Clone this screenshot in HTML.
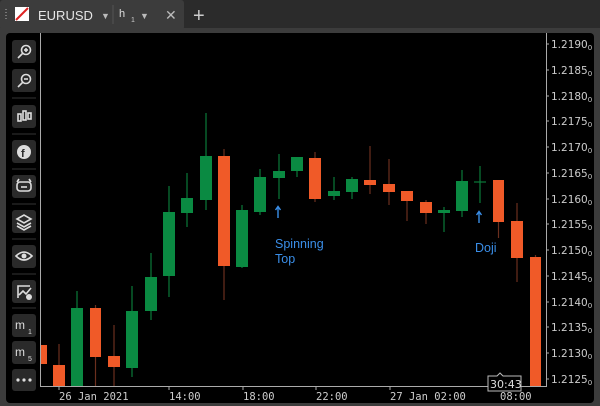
<!DOCTYPE html>
<html><head><meta charset="utf-8"><style>
body{margin:0;width:600px;height:406px;background:#3b3b3b;overflow:hidden;font-family:"Liberation Sans",sans-serif}
</style></head><body>
<svg width="600" height="406" xmlns="http://www.w3.org/2000/svg" style="position:absolute;left:0;top:0">
<rect x="0" y="0" width="600" height="28" fill="#2b2b2b"/>
<rect x="0" y="0" width="184" height="30" rx="3" fill="#3c3c3c"/>
<rect x="0" y="28" width="600" height="378" fill="#3c3c3c"/>
<g fill="#777"><rect x="5" y="9" width="2" height="1"/><rect x="5" y="12" width="2" height="1"/><rect x="5" y="15" width="2" height="1"/><rect x="5" y="18" width="2" height="1"/></g>
<rect x="15" y="7" width="14" height="14" fill="#fff"/>
<line x1="16" y1="20" x2="28" y2="8" stroke="#d22" stroke-width="2"/>
<text x="38" y="20" fill="#e6e6e6" font-size="13">EURUSD</text>
<text x="101" y="19" fill="#bbb" font-size="9">▼</text>
<line x1="113" y1="5" x2="113" y2="24" stroke="#555"/>
<text x="119" y="17" fill="#ddd" font-size="11">h</text>
<text x="131" y="22" fill="#ccc" font-size="7">1</text>
<text x="140" y="19" fill="#bbb" font-size="9">▼</text>
<text x="165" y="20" fill="#bbb" font-size="14">✕</text>
<text x="193" y="22" fill="#ccc" font-size="20">+</text>
<rect x="6" y="33" width="588" height="370" rx="4" fill="#000"/>
<g fill="#2a2a2a">
<rect x="12" y="40" width="24" height="23" rx="3"/><rect x="12" y="69" width="24" height="23" rx="3"/>
<rect x="12" y="105" width="24" height="23" rx="3"/><rect x="12" y="140" width="24" height="23" rx="3"/>
<rect x="12" y="175" width="24" height="23" rx="3"/><rect x="12" y="210" width="24" height="23" rx="3"/>
<rect x="12" y="245" width="24" height="23" rx="3"/><rect x="12" y="280" width="24" height="23" rx="3"/>
<rect x="12" y="314" width="24" height="23" rx="3"/><rect x="12" y="341" width="24" height="23" rx="3"/>
<rect x="12" y="369" width="24" height="22" rx="3"/>
</g>
<g stroke="#333"><line x1="12" y1="98" x2="36" y2="98"/><line x1="12" y1="134" x2="36" y2="134"/><line x1="12" y1="169" x2="36" y2="169"/><line x1="12" y1="204" x2="36" y2="204"/><line x1="12" y1="239" x2="36" y2="239"/><line x1="12" y1="274" x2="36" y2="274"/><line x1="12" y1="308" x2="36" y2="308"/></g>
<g stroke="#ddd" fill="none" stroke-width="1.6">
<circle cx="26" cy="50" r="4.5"/><line x1="23" y1="53" x2="18" y2="58"/><line x1="24" y1="50" x2="28" y2="50"/><line x1="26" y1="48" x2="26" y2="52"/>
<circle cx="26" cy="79" r="4.5"/><line x1="23" y1="82" x2="18" y2="87"/><line x1="24" y1="79" x2="28" y2="79"/>
<rect x="18" y="114" width="3" height="7"/><rect x="23" y="111" width="3" height="9"/><rect x="28" y="113" width="3" height="6"/>
<rect x="17" y="182" width="14" height="9" rx="3"/><line x1="17" y1="182" x2="19" y2="179"/><line x1="31" y1="182" x2="29" y2="179"/><line x1="21" y1="187" x2="27" y2="187"/>
<path d="M17 219l7-4 7 4-7 4z M17 223l7 4 7-4 M17 226l7 4 7-4"/>
<path d="M16 256q8-8 16 0q-8 8-16 0z"/>
<path d="M18 298v-12h12 M19 295l4-4 3 3 5-6"/>
</g>
<circle cx="24" cy="152" r="7" fill="#ddd"/><text x="21" y="157" fill="#2a2a2a" font-size="11" font-weight="bold">f</text>
<circle cx="24" cy="256" r="2.5" fill="#ddd"/>
<circle cx="29" cy="297" r="3" fill="#ddd"/>
<text x="15" y="329" fill="#ddd" font-size="12">m</text><text x="28" y="334" fill="#ddd" font-size="7">1</text>
<text x="15" y="356" fill="#ddd" font-size="12">m</text><text x="28" y="361" fill="#ddd" font-size="7">5</text>
<g fill="#ddd"><circle cx="18" cy="380" r="1.6"/><circle cx="24" cy="380" r="1.6"/><circle cx="30" cy="380" r="1.6"/></g>
<line x1="40.5" y1="33" x2="40.5" y2="386" stroke="#aaa"/>
<line x1="40" y1="386.5" x2="546" y2="386.5" stroke="#aaa"/>
<line x1="546.5" y1="33" x2="546.5" y2="387" stroke="#aaa"/>
<g stroke="#aaa"><line x1="59" y1="386" x2="59" y2="390"/><line x1="169" y1="386" x2="169" y2="390"/><line x1="243" y1="386" x2="243" y2="390"/><line x1="316" y1="386" x2="316" y2="390"/><line x1="390" y1="386" x2="390" y2="390"/><line x1="500" y1="386" x2="500" y2="390"/></g>
<g font-family="DejaVu Sans Mono,monospace" font-size="10.5" fill="#ccc">
<text x="59" y="400">26 Jan 2021</text><text x="169" y="400">14:00</text><text x="243" y="400">18:00</text><text x="316" y="400">22:00</text><text x="390" y="400">27 Jan 02:00</text><text x="500" y="400">08:00</text>
</g>
<g font-family="DejaVu Sans,sans-serif" font-size="10.5" fill="#ccc">
<text x="551" y="48">1.2190<tspan font-size="7" dy="2">0</tspan></text>
<text x="551" y="74">1.2185<tspan font-size="7" dy="2">0</tspan></text>
<text x="551" y="100">1.2180<tspan font-size="7" dy="2">0</tspan></text>
<text x="551" y="125">1.2175<tspan font-size="7" dy="2">0</tspan></text>
<text x="551" y="151">1.2170<tspan font-size="7" dy="2">0</tspan></text>
<text x="551" y="177">1.2165<tspan font-size="7" dy="2">0</tspan></text>
<text x="551" y="203">1.2160<tspan font-size="7" dy="2">0</tspan></text>
<text x="551" y="228">1.2155<tspan font-size="7" dy="2">0</tspan></text>
<text x="551" y="254">1.2150<tspan font-size="7" dy="2">0</tspan></text>
<text x="551" y="280">1.2145<tspan font-size="7" dy="2">0</tspan></text>
<text x="551" y="306">1.2140<tspan font-size="7" dy="2">0</tspan></text>
<text x="551" y="331">1.2135<tspan font-size="7" dy="2">0</tspan></text>
<text x="551" y="357">1.2130<tspan font-size="7" dy="2">0</tspan></text>
<text x="551" y="383">1.2125<tspan font-size="7" dy="2">0</tspan></text>
</g>
<g stroke="#aaa"><line x1="546" y1="44" x2="549" y2="44"/><line x1="546" y1="70" x2="549" y2="70"/><line x1="546" y1="96" x2="549" y2="96"/><line x1="546" y1="121" x2="549" y2="121"/><line x1="546" y1="147" x2="549" y2="147"/><line x1="546" y1="173" x2="549" y2="173"/><line x1="546" y1="199" x2="549" y2="199"/><line x1="546" y1="224" x2="549" y2="224"/><line x1="546" y1="250" x2="549" y2="250"/><line x1="546" y1="276" x2="549" y2="276"/><line x1="546" y1="302" x2="549" y2="302"/><line x1="546" y1="327" x2="549" y2="327"/><line x1="546" y1="353" x2="549" y2="353"/><line x1="546" y1="379" x2="549" y2="379"/></g>
<g stroke-width="1.2">
<g stroke="#6b2f1e" fill="#f05a28">
<rect x="41" y="345" width="6" height="19" stroke="none"/>
<line x1="59" y1="344" x2="59" y2="386"/><rect x="53" y="365" width="12" height="21" stroke="none"/>
<line x1="95.5" y1="305" x2="95.5" y2="386"/><rect x="90" y="308" width="11" height="49" stroke="none"/>
<line x1="114" y1="325" x2="114" y2="386"/><rect x="108" y="356" width="12" height="11" stroke="none"/>
<line x1="224" y1="149" x2="224" y2="300"/><rect x="218" y="156" width="12" height="110" stroke="none"/>
<line x1="315" y1="152" x2="315" y2="202"/><rect x="309" y="158" width="12" height="41" stroke="none"/>
<line x1="370" y1="146" x2="370" y2="194"/><rect x="364" y="180" width="12" height="5" stroke="none"/>
<line x1="389" y1="159" x2="389" y2="205"/><rect x="383" y="184" width="12" height="8" stroke="none"/>
<line x1="407" y1="191" x2="407" y2="221"/><rect x="401" y="191" width="12" height="10" stroke="none"/>
<line x1="426" y1="200" x2="426" y2="224"/><rect x="420" y="202" width="12" height="11" stroke="none"/>
<line x1="498.5" y1="180" x2="498.5" y2="238"/><rect x="493" y="180" width="11" height="42" stroke="none"/>
<line x1="517" y1="203" x2="517" y2="282"/><rect x="511" y="221" width="12" height="37" stroke="none"/>
<line x1="535.5" y1="255" x2="535.5" y2="386"/><rect x="530" y="257" width="11" height="129" stroke="none"/>
</g>
<g stroke="#0b7a3a" fill="#0a8a42">
<line x1="77" y1="291" x2="77" y2="386"/><rect x="71" y="308" width="12" height="78" stroke="none"/>
<line x1="132" y1="286" x2="132" y2="377"/><rect x="126" y="311" width="12" height="57" stroke="none"/>
<line x1="151" y1="253" x2="151" y2="320"/><rect x="145" y="277" width="12" height="34" stroke="none"/>
<line x1="169" y1="186" x2="169" y2="297"/><rect x="163" y="212" width="12" height="64" stroke="none"/>
<line x1="187" y1="173" x2="187" y2="227"/><rect x="181" y="198" width="12" height="15" stroke="none"/>
<line x1="206" y1="113" x2="206" y2="210"/><rect x="200" y="156" width="12" height="44" stroke="none"/>
<line x1="242" y1="205" x2="242" y2="268"/><rect x="236" y="210" width="12" height="57" stroke="none"/>
<line x1="260" y1="169" x2="260" y2="215"/><rect x="254" y="177" width="12" height="35" stroke="none"/>
<line x1="279" y1="154" x2="279" y2="199"/><rect x="273" y="171" width="12" height="7" stroke="none"/>
<line x1="297" y1="157" x2="297" y2="177"/><rect x="291" y="157" width="12" height="14" stroke="none"/>
<line x1="334" y1="177" x2="334" y2="200"/><rect x="328" y="191" width="12" height="5" stroke="none"/>
<line x1="352" y1="177" x2="352" y2="199"/><rect x="346" y="179" width="12" height="13" stroke="none"/>
<line x1="444" y1="207" x2="444" y2="232"/><rect x="438" y="210" width="12" height="3" stroke="none"/>
<line x1="462" y1="170" x2="462" y2="217"/><rect x="456" y="181" width="12" height="30" stroke="none"/>
<line x1="480" y1="166" x2="480" y2="203"/><line x1="474" y1="182" x2="486" y2="182"/>
</g>
</g>
<g stroke="#3a8ee8" stroke-width="1.4" fill="none"><line x1="278" y1="207" x2="278" y2="218"/><path d="M275.5 210l2.5-3.5 2.5 3.5"/><line x1="479" y1="212" x2="479" y2="223"/><path d="M476.5 215l2.5-3.5 2.5 3.5"/></g>
<g fill="#3a8ee8" font-size="12.5">
<text x="275" y="248">Spinning</text><text x="275" y="263">Top</text>
<text x="475" y="252">Doji</text>
</g>
<path d="M488 376h9l3-3 3 3h18v15h-33z" fill="#000" stroke="#bbb"/>
<text x="490" y="388" fill="#ddd" font-size="11" font-family="DejaVu Sans,sans-serif">30:43</text>
</svg>
</body></html>
